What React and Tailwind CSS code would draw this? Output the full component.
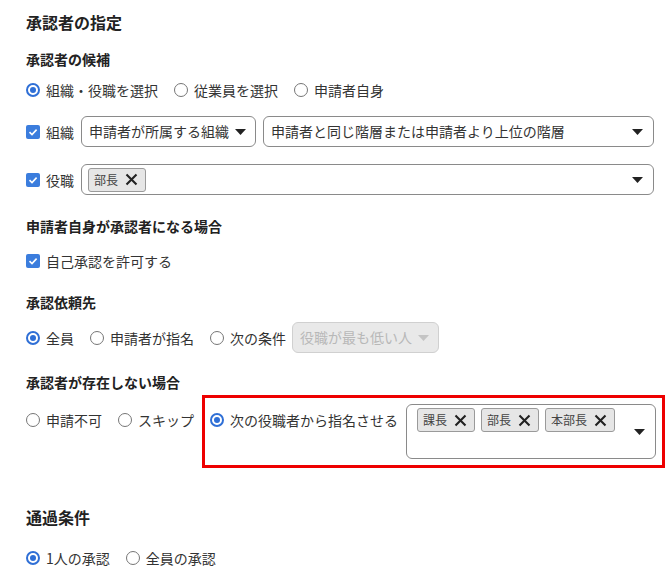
import React from "react";

const F = { fontFamily: '"Noto Sans CJK JP", "Noto Sans", sans-serif' };

function Radio({ checked, label }) {
  return (
    <label className="flex items-center h-[20px] shrink-0">
      {checked ? (
        <span className="w-[14px] h-[14px] rounded-full border-2 border-[#2f6fd6] flex items-center justify-center bg-white">
          <span className="w-[6px] h-[6px] rounded-full bg-[#2f6fd6]" />
        </span>
      ) : (
        <span className="w-[14px] h-[14px] rounded-full border-[1.5px] border-[#767676] bg-white" />
      )}
      <span className="ml-[6px] text-[14px] text-[#333] leading-[20px] whitespace-nowrap">{label}</span>
    </label>
  );
}

function Check({ label }) {
  return (
    <label className="flex items-center h-[20px] shrink-0">
      <span className="w-[14px] h-[14px] rounded-[2px] bg-[#3b7ddd] flex items-center justify-center">
        <svg width="10" height="10" viewBox="0 0 10 10">
          <path d="M1.5 5.2 L4 7.6 L8.6 2.6" fill="none" stroke="white" strokeWidth="1.6" />
        </svg>
      </span>
      <span className="ml-[6px] text-[14px] text-[#333] leading-[20px] whitespace-nowrap">{label}</span>
    </label>
  );
}

function Caret({ color = "#222" }) {
  return (
    <svg width="11" height="6" viewBox="0 0 11 6" className="shrink-0">
      <path d="M0 0 H11 L5.5 6 Z" fill={color} />
    </svg>
  );
}

function Tag({ label }) {
  return (
    <span className="flex items-center h-[24px] pl-[5px] pr-[7px] bg-[#e6e6e6] border border-[#9a9a9a] rounded-[3px] shrink-0">
      <span className="text-[12px] text-[#444] leading-none whitespace-nowrap">{label}</span>
      <svg width="13" height="13" viewBox="0 0 13 13" className="ml-[7px]">
        <path d="M1.5 1.5 L11.5 11.5 M11.5 1.5 L1.5 11.5" stroke="#222" strokeWidth="2.1" />
      </svg>
    </span>
  );
}

function H({ children, className = "" }) {
  return (
    <div className={"h-[20px] flex items-center text-[14px] font-bold text-[#222] leading-[20px] " + className}>
      {children}
    </div>
  );
}

export default function App() {
  return (
    <div style={F} className="w-[670px] h-[580px] bg-white pl-[26px] pt-[10px] overflow-hidden">
      <div className="h-[24px] flex items-center text-[16px] font-bold text-[#222]">承認者の指定</div>

      <H className="mt-[15px]">承認者の候補</H>
      <div className="mt-[11px] flex items-center gap-[16px]">
        <Radio checked label="組織・役職を選択" />
        <Radio label="従業員を選択" />
        <Radio label="申請者自身" />
      </div>

      <div className="mt-[16px] flex items-center h-[31px]">
        <Check label="組織" />
        <div className="ml-[7px] w-[175px] h-[31px] border border-[#8a8a8a] rounded-[6px] flex items-center pl-[7px] pr-[9px] justify-between">
          <span className="text-[14px] text-[#333] whitespace-nowrap">申請者が所属する組織</span>
          <Caret />
        </div>
        <div className="ml-[7px] w-[391px] h-[31px] border border-[#8a8a8a] rounded-[6px] flex items-center pl-[7px] pr-[10px] justify-between">
          <span className="text-[14px] text-[#333] whitespace-nowrap">申請者と同じ階層または申請者より上位の階層</span>
          <Caret />
        </div>
      </div>

      <div className="mt-[17px] flex items-center h-[31px]">
        <Check label="役職" />
        <div className="ml-[7px] w-[573px] h-[31px] border border-[#8a8a8a] rounded-[6px] flex items-center pl-[6px] pr-[10px] justify-between">
          <Tag label="部長" />
          <Caret />
        </div>
      </div>

      <H className="mt-[21px]">申請者自身が承認者になる場合</H>
      <div className="mt-[15px]">
        <Check label="自己承認を許可する" />
      </div>

      <H className="mt-[21px]">承認依頼先</H>
      <div className="mt-[10px] flex items-center h-[31px]">
        <Radio checked label="全員" />
        <div className="ml-[16px]"><Radio label="申請者が指名" /></div>
        <div className="ml-[16px]"><Radio label="次の条件" /></div>
        <div className="ml-[6px] w-[147px] h-[31px] bg-[#e9e9e9] border border-[#d0d0d0] rounded-[6px] flex items-center pl-[7px] pr-[9px] justify-between">
          <span className="text-[14px] text-[#b8b8b8] whitespace-nowrap">役職が最も低い人</span>
          <Caret color="#c4c4c4" />
        </div>
      </div>

      <H className="mt-[19px]">承認者が存在しない場合</H>
      <div className="mt-[3px] flex items-start">
        <div className="w-[176px] flex items-center gap-[16px] mt-[15px]">
          <Radio label="申請不可" />
          <Radio label="スキップ" />
        </div>
        <div className="w-[463px] h-[73px] border-[3px] border-[#ee0000] flex items-start pl-[5px]">
          <div className="mt-[12px]">
            <Radio checked label="次の役職者から指名させる" />
          </div>
          <div className="ml-[8px] mt-[6px] w-[250px] h-[55px] border border-[#8a8a8a] rounded-[6px] flex pl-[10px] pt-[3px] pr-[10px] justify-between">
            <div className="flex gap-[6px] h-[24px]">
              <Tag label="課長" />
              <Tag label="部長" />
              <Tag label="本部長" />
            </div>
            <div className="pt-[21px]"><Caret /></div>
          </div>
        </div>
      </div>

      <div className="mt-[37px] h-[24px] flex items-center text-[16px] font-bold text-[#222]">通過条件</div>
      <div className="mt-[19px] flex items-center gap-[16px]">
        <Radio checked label="1人の承認" />
        <Radio label="全員の承認" />
      </div>
    </div>
  );
}
